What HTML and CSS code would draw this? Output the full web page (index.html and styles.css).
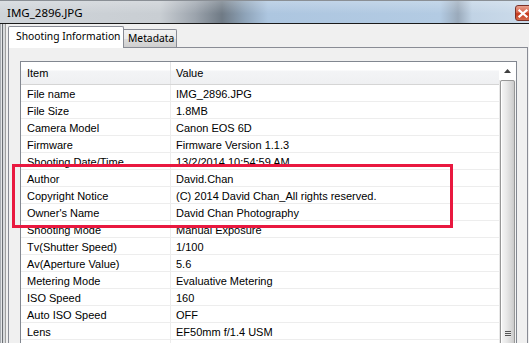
FILE: index.html
```html
<!DOCTYPE html>
<html>
<head>
<meta charset="utf-8">
<link rel="stylesheet" href="styles.css">
</head>
<body>
<div class="window">
  <div class="titlebar">
    <span class="title">IMG_2896.JPG</span>
    <span class="close"><svg width="10" height="9" viewBox="0 0 10 9"><path d="M1.5 1.5 L8.5 7.5 M8.5 1.5 L1.5 7.5" stroke="#fff" stroke-width="2.2" stroke-linecap="square"/></svg></span>
  </div>
  <div class="body">
    <div class="frame-left"></div>
    <div class="client">
      <div class="tabs">
        <div class="tab active">Shooting Information</div>
        <div class="tab">Metadata</div>
      </div>
      <div class="panel">
        <div class="listbox">
          <div class="list">
            <div class="row head"><div class="c1">Item</div><div class="c2">Value</div></div>
            <div class="row"><div class="c1">File name</div><div class="c2">IMG_2896.JPG</div></div>
            <div class="row"><div class="c1">File Size</div><div class="c2">1.8MB</div></div>
            <div class="row"><div class="c1">Camera Model</div><div class="c2">Canon EOS 6D</div></div>
            <div class="row"><div class="c1">Firmware</div><div class="c2">Firmware Version 1.1.3</div></div>
            <div class="row"><div class="c1">Shooting Date/Time</div><div class="c2">13/2/2014 10:54:59 AM</div></div>
            <div class="row"><div class="c1">Author</div><div class="c2">David.Chan</div></div>
            <div class="row"><div class="c1">Copyright Notice</div><div class="c2">(C) 2014 David Chan_All rights reserved.</div></div>
            <div class="row"><div class="c1">Owner's Name</div><div class="c2">David Chan Photography</div></div>
            <div class="row"><div class="c1">Shooting Mode</div><div class="c2">Manual Exposure</div></div>
            <div class="row"><div class="c1">Tv(Shutter Speed)</div><div class="c2">1/100</div></div>
            <div class="row"><div class="c1">Av(Aperture Value)</div><div class="c2">5.6</div></div>
            <div class="row"><div class="c1">Metering Mode</div><div class="c2">Evaluative Metering</div></div>
            <div class="row"><div class="c1">ISO Speed</div><div class="c2">160</div></div>
            <div class="row"><div class="c1">Auto ISO Speed</div><div class="c2">OFF</div></div>
            <div class="row"><div class="c1">Lens</div><div class="c2">EF50mm f/1.4 USM</div></div>
            <div class="row"><div class="c1"></div><div class="c2"></div></div>
          </div>
          <div class="scrollbar">
            <div class="up"><svg width="7" height="4" viewBox="0 0 7 4"><path d="M3.5 0 L7 4 L0 4 Z" fill="#404040"/></svg></div>
            <div class="thumb"><div class="grip"></div></div>
          </div>
        </div>
      </div>
    </div>
  </div>
  <div class="highlight"></div>
</div>
</body>
</html>
```
FILE: styles.css
```css
html, body {
  margin: 0;
  padding: 0;
  background: #f0f0f0;
}
.window {
  position: relative;
  width: 529px;
  height: 343px;
  overflow: hidden;
  background: #f0f0f0;
}
.titlebar {
  height: 23px;
  border-bottom: 1px solid #1a1a1a;
  display: flex;
  align-items: center;
  background:
    linear-gradient(to bottom, rgba(255,255,255,0.25), rgba(255,255,255,0) 60%),
    linear-gradient(to right, #cfd4d9 0, #c9ced3 160px, #9ca4ad 195px, #6f7a85 222px, #8ea3b8 245px, #adc6e0 268px, #b3cbe3 440px, #9aaabb 458px, #c1d3e5 472px, #ccdbea 529px);
  box-shadow: inset 0 1px 0 #8a8f95;
}
.title {
  font-family: "Noto Sans", "DejaVu Sans", sans-serif;
  font-size: 11.5px;
  color: #000;
  padding-left: 7px;
  padding-top: 1px;
}
.close {
  margin-left: auto;
  margin-right: -4px;
  width: 18px;
  height: 16px;
  margin-top: 3px;
  border: 1px solid #7a3128;
  border-radius: 3px;
  background: linear-gradient(to bottom, #e8a08e 0, #d9654c 45%, #c4381c 55%, #d66a4c 100%);
  display: flex;
  align-items: center;
  padding-left: 2px;
  box-sizing: border-box;
}
.body {
  display: flex;
  height: 319px;
}
.frame-left {
  width: 7px;
  flex: none;
  background: linear-gradient(to right, #a9adb2 0 1px, #e4e6e8 1px 2px, #6a6e73 2px 3px, #d8dadc 3px 5px, #a0a0a0 5px 6px, #f0f0f0 6px 7px);
}
.client {
  flex: 1;
  padding-top: 2px;
  display: flex;
  flex-direction: column;
}
.tabs {
  display: flex;
  align-items: flex-end;
  padding-left: 1px;
  height: 21px;
  position: relative;
  z-index: 1;
}
.tab {
  font-family: "Noto Sans", "DejaVu Sans", sans-serif;
  font-size: 10.3px;
  color: #000;
  border: 1px solid #898c95;
  border-bottom: none;
  box-sizing: border-box;
  white-space: nowrap;
  line-height: 15px;
}
.tab.active {
  height: 22px;
  margin-bottom: -1px;
  background: #fff;
  padding: 2px 0 0 7px;
  width: 116px;
  border-radius: 2px 2px 0 0;
}
.tab:not(.active) {
  height: 18px;
  border-left: none;
  padding: 1px 0 0 4px;
  width: 53px;
  background: linear-gradient(to bottom, #f2f2f2 0, #ebebeb 50%, #dddddd 51%, #cfcfcf 100%);
  border-radius: 0 2px 0 0;
}
.panel {
  margin: 0 1px 0 1px;
  border: 1px solid #898c95;
  background: #f0f0f0;
  padding: 13px 10px 0 11px;
  flex: 1;
}
.listbox {
  border: 1px solid #828790;
  background: #fff;
  display: flex;
  height: 400px;
  width: 497px;
  box-sizing: border-box;
}
.list {
  flex: 1;
  font-family: "Liberation Sans", Arial, sans-serif;
  font-size: 11px;
  color: #000;
}
.row {
  display: flex;
  height: 16px;
  line-height: 19px;
  border-bottom: 1px solid #ededed;
}
.row.head {
  height: 22px;
  line-height: 22px;
  border-bottom: 1px solid #d5d5d5;
  background: linear-gradient(to bottom, #ffffff 0 8px, #f3f4f6 9px, #eff0f2 100%);
}
.c1 {
  width: 150px;
  padding-left: 6px;
  box-sizing: border-box;
  border-right: 1px solid #ececec;
  white-space: nowrap;
  flex: none;
}
.head .c1 {
  border-right-color: #e3e4e6;
}
.c2 {
  padding-left: 5px;
  white-space: nowrap;
}
.scrollbar {
  width: 17px;
  flex: none;
  background: linear-gradient(to right, #e7e7e7, #f4f4f4);
  display: flex;
  flex-direction: column;
}
.up {
  height: 18px;
  display: flex;
  align-items: center;
  justify-content: center;
  background: #fff;
}
.thumb {
  margin: 0 1px 0 1px;
  height: 300px;
  border: 1px solid #979797;
  border-radius: 2px;
  background: linear-gradient(to right, #f6f6f6 0, #e9e9e9 40%, #d6d6d6 80%, #cbcbcb 100%);
  position: relative;
  box-shadow: inset 1px 0 0 #fff;
}
.grip {
  position: absolute;
  left: 4px;
  top: 250px;
  width: 6px;
  height: 6px;
  background: repeating-linear-gradient(to bottom, #555 0 1px, #e8e8e8 1px 2px);
}
.highlight {
  position: absolute;
  left: 12px;
  top: 164px;
  width: 441px;
  height: 64px;
  box-sizing: border-box;
  border: 3px solid #e9183f;
}
```
